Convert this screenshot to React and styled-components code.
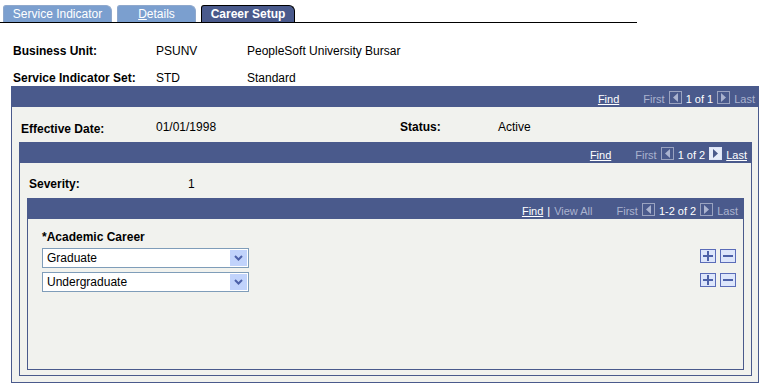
import React from 'react';
import styled, { createGlobalStyle } from 'styled-components';

const GlobalStyle = createGlobalStyle`
  body {
    margin: 0;
    background: #ffffff;
    font-family: Arial, 'Liberation Sans', sans-serif;
    font-size: 12px;
    color: #000;
  }
`;

const BLUE = '#4a5a8c';
const PANEL = '#f1f2ee';

const Page = styled.div`
  width: 762px;
  height: 387px;
  overflow: hidden;
`;

const TabBar = styled.div`
  display: flex;
  align-items: flex-end;
  gap: 5px;
  width: 634px;
  height: 22px;
  padding-left: 3px;
  border-bottom: 1px solid #000;
`;

const Tab = styled.div`
  width: ${(p) => p.$w}px;
  height: 17px;
  display: flex;
  align-items: center;
  justify-content: center;
  color: #fff;
  font-size: 12px;
  font-weight: ${(p) => (p.$active ? 'bold' : 'normal')};
  background: ${(p) => (p.$active ? BLUE : '#7b9fcf')};
  border: 1px solid ${(p) => (p.$active ? '#000' : '#8fa8cc')};
  border-bottom: none;
  border-radius: 3px 6px 0 0;
  box-sizing: border-box;
  span.u {
    text-decoration: underline;
  }
`;

const InfoGrid = styled.div`
  display: grid;
  grid-template-columns: 143px 91px 1fr;
  row-gap: 11px;
  padding: 21px 0 0 13px;
  height: 42px;
`;

const Label = styled.div`
  font-weight: bold;
`;

const Value = styled.div``;

const Box = styled.div`
  border: 1px solid ${BLUE};
  background: ${PANEL};
  margin: ${(p) => p.$margin};
  height: ${(p) => p.$h}px;
  box-sizing: border-box;
  display: flex;
  flex-direction: column;
`;

const NavBar = styled.div`
  background: ${BLUE};
  height: 20px;
  flex: none;
  display: flex;
  align-items: flex-end;
  justify-content: flex-end;
  padding: 0 ${(p) => p.$pr}px 2px 0;
  box-sizing: border-box;
  font-size: 11px;
  color: #b4bcd6;
  gap: 4px;
`;

const NavLink = styled.span`
  color: #fff;
  text-decoration: ${(p) => (p.$u ? 'underline' : 'none')};
`;

const NavDim = styled.span`
  color: #aab3cf;
  margin-left: ${(p) => p.$ml || 0}px;
`;

const Count = styled.span`
  color: #fff;
`;

const ArrowBox = styled.span`
  width: 13px;
  height: 13px;
  box-sizing: border-box;
  border: 1px solid ${(p) => (p.$on ? '#dfe6f7' : '#9aa3c0')};
  background: ${(p) => (p.$on ? '#e6ecfa' : BLUE)};
  display: inline-flex;
  align-items: center;
  justify-content: center;
  margin-bottom: 1px;
`;

const Arrow = ({ dir, on }) => (
  <ArrowBox $on={on}>
    <svg width="7" height="9" viewBox="0 0 7 9">
      {dir === 'left' ? (
        <polygon points="6,0 6,9 1,4.5" fill={on ? BLUE : '#aab3cf'} />
      ) : (
        <polygon points="1,0 1,9 6,4.5" fill={on ? BLUE : '#aab3cf'} />
      )}
    </svg>
  </ArrowBox>
);

const Row = styled.div`
  display: flex;
  align-items: center;
  padding: ${(p) => p.$pad};
  height: ${(p) => p.$h}px;
  box-sizing: border-box;
  flex: none;
`;

const Field = styled.div`
  width: ${(p) => p.$w}px;
  flex: none;
  font-weight: ${(p) => (p.$bold ? 'bold' : 'normal')};
  margin-top: ${(p) => p.$dy || 0}px;
`;

const CareerHead = styled.div`
  font-weight: bold;
  padding: 11px 0 2px 14px;
`;

const CareerRow = styled.div`
  display: flex;
  align-items: center;
  justify-content: space-between;
  padding: 2px 7px 2px 14px;
`;

const Select = styled.div`
  width: 207px;
  height: 20px;
  box-sizing: border-box;
  border: 1px solid #7f9db9;
  background: #fff;
  display: flex;
  align-items: center;
  justify-content: space-between;
  padding-left: 4px;
  font-size: 12px;
`;

const SelectBtn = styled.span`
  width: 17px;
  height: 16px;
  margin-right: 1px;
  background: #c1d3fb;
  display: flex;
  align-items: center;
  justify-content: center;
`;

const Buttons = styled.div`
  display: flex;
  gap: 4px;
  margin-bottom: 4px;
`;

const IconBtn = styled.span`
  width: 16px;
  height: 14px;
  box-sizing: border-box;
  border: 1px solid #5a6cb8;
  background: #dde6fb;
  display: flex;
  align-items: center;
  justify-content: center;
`;

const Chevron = () => (
  <svg width="9" height="6" viewBox="0 0 9 6">
    <polyline points="1,1 4.5,4.5 8,1" fill="none" stroke="#4d61a8" strokeWidth="2" />
  </svg>
);

const Plus = () => (
  <svg width="10" height="10" viewBox="0 0 10 10">
    <rect x="4" y="0" width="2" height="10" fill="#4d61a8" />
    <rect x="0" y="4" width="10" height="2" fill="#4d61a8" />
  </svg>
);

const Minus = () => (
  <svg width="10" height="10" viewBox="0 0 10 10">
    <rect x="0" y="4" width="10" height="2" fill="#4d61a8" />
  </svg>
);

const CareerLine = ({ name }) => (
  <CareerRow>
    <Select>
      {name}
      <SelectBtn>
        <Chevron />
      </SelectBtn>
    </Select>
    <Buttons>
      <IconBtn>
        <Plus />
      </IconBtn>
      <IconBtn>
        <Minus />
      </IconBtn>
    </Buttons>
  </CareerRow>
);

export default function App() {
  return (
    <Page>
      <GlobalStyle />
      <TabBar>
        <Tab $w={109}>Service Indicator</Tab>
        <Tab $w={79}>
          <span>
            <span className="u">D</span>etails
          </span>
        </Tab>
        <Tab $w={94} $active>
          Career Setup
        </Tab>
      </TabBar>

      <InfoGrid>
        <Label>Business Unit:</Label>
        <Value>PSUNV</Value>
        <Value>PeopleSoft University Bursar</Value>
        <Label>Service Indicator Set:</Label>
        <Value>STD</Value>
        <Value>Standard</Value>
      </InfoGrid>

      <Box $margin="0 3px 0 11px" $h={297}>
        <NavBar $pr={3}>
          <NavLink $u>Find</NavLink>
          <NavDim $ml={20}>First</NavDim>
          <Arrow dir="left" />
          <Count>1 of 1</Count>
          <Arrow dir="right" />
          <NavDim>Last</NavDim>
        </NavBar>
        <Row $pad="5px 0 0 9px" $h={35}>
          <Field $w={135} $bold $dy={4}>
            Effective Date:
          </Field>
          <Field $w={244}>01/01/1998</Field>
          <Field $w={98} $bold>
            Status:
          </Field>
          <Field $w={80}>Active</Field>
        </Row>

        <Box $margin="0 6px 6px 7px" $h={234}>
          <NavBar $pr={4}>
            <NavLink $u>Find</NavLink>
            <NavDim $ml={20}>First</NavDim>
            <Arrow dir="left" />
            <Count>1 of 2</Count>
            <Arrow dir="right" on />
            <NavLink $u>Last</NavLink>
          </NavBar>
          <Row $pad="6px 0 0 9px" $h={35}>
            <Field $w={159} $bold>
              Severity:
            </Field>
            <Field $w={40}>1</Field>
          </Row>

          <Box $margin="0 7px 5px 7px" $h={172}>
            <NavBar $pr={5}>
              <NavLink $u>Find</NavLink>
              <Count>|</Count>
              <NavDim>View All</NavDim>
              <NavDim $ml={20}>First</NavDim>
              <Arrow dir="left" />
              <Count>1-2 of 2</Count>
              <Arrow dir="right" />
              <NavDim>Last</NavDim>
            </NavBar>
            <CareerHead>*Academic Career</CareerHead>
            <CareerLine name="Graduate" />
            <CareerLine name="Undergraduate" />
          </Box>
        </Box>
      </Box>
    </Page>
  );
}
